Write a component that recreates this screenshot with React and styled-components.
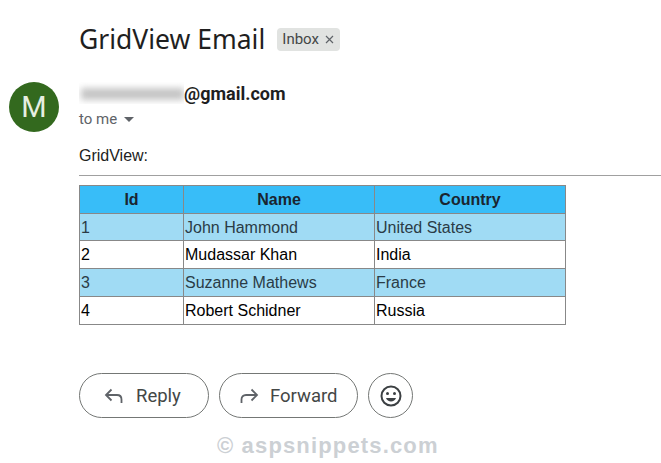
import React from 'react';
import styled, { createGlobalStyle } from 'styled-components';

const rows = [
    { id: 1, name: 'John Hammond', country: 'United States' },
    { id: 2, name: 'Mudassar Khan', country: 'India' },
    { id: 3, name: 'Suzanne Mathews', country: 'France' },
    { id: 4, name: 'Robert Schidner', country: 'Russia' },
];

function App() {
    return (
        <Wrapper>
            <GlobalStyle />
            <SubjectRow>
                <Subject>GridView Email</Subject>
                <Label>
                    Inbox
                    <svg width="9" height="9" viewBox="0 0 9 9">
                        <path d="M1 1l7 7M8 1L1 8" stroke="#5f6368" strokeWidth="1.2" fill="none" />
                    </svg>
                </Label>
            </SubjectRow>

            <MessageRow>
                <Avatar>M</Avatar>
                <MessageBody>
                    <Sender>
                        <BlurWrap><BlurBar /></BlurWrap>
                        @gmail.com
                    </Sender>
                    <ToMe>
                        to me
                        <svg width="10" height="5" viewBox="0 0 10 5">
                            <path d="M0 0h10L5 5z" fill="#5f6368" />
                        </svg>
                    </ToMe>
                    <Intro>GridView:</Intro>
                    <Rule />
                    <Table>
                        <thead>
                            <tr>
                                <HeadCell $w={104}>Id</HeadCell>
                                <HeadCell $w={191}>Name</HeadCell>
                                <HeadCell $w={191}>Country</HeadCell>
                            </tr>
                        </thead>
                        <tbody>
                            {rows.map((row, i) => (
                                <Row key={row.id} $alt={i % 2 === 0} $short={i === 0}>
                                    <Cell $low={i < 3}>{row.id}</Cell>
                                    <Cell $low={i < 3}>{row.name}</Cell>
                                    <Cell $low={i < 3}>{row.country}</Cell>
                                </Row>
                            ))}
                        </tbody>
                    </Table>
                </MessageBody>
            </MessageRow>

            <Actions>
                <PillButton $w={130} $pad={24} $gap={12}>
                    <svg width="20" height="20" viewBox="0 0 20 20">
                        <path d="M7.500 3.500L2 9l5.500 5.500M2.500 9H13c2.800 0 4.500 1.800 4.500 4.500V17" stroke="#5f6368" strokeWidth="1.800" fill="none" />
                    </svg>
                    Reply
                </PillButton>
                <PillButton $w={139} $pad={19} $gap={11}>
                    <svg width="20" height="20" viewBox="0 0 20 20">
                        <path d="M12.500 3.500L18 9l-5.500 5.500M17.500 9H7C4.200 9 2.500 10.800 2.500 13.500V17" stroke="#5f6368" strokeWidth="1.800" fill="none" />
                    </svg>
                    Forward
                </PillButton>
                <RoundButton>
                    <svg width="24" height="24" viewBox="0 0 24 24">
                        <circle cx="12" cy="12" r="9.500" stroke="#3c4043" strokeWidth="2" fill="none" />
                        <circle cx="8.500" cy="9.500" r="1.500" fill="#3c4043" />
                        <circle cx="15.500" cy="9.500" r="1.500" fill="#3c4043" />
                        <path d="M7 14h10c-.8 2.300-2.700 3.500-5 3.500S7.800 16.300 7 14z" fill="#3c4043" />
                    </svg>
                </RoundButton>
            </Actions>

            <Watermark>© aspsnippets.com</Watermark>
        </Wrapper>
    );
}

export default App;

const GlobalStyle = createGlobalStyle`
    html, body {
        margin: 0;
        padding: 0;
        background: #fff;
    }
    body {
        font-family: "Liberation Sans", Arial, sans-serif;
        overflow: hidden;
    }
`;

const Wrapper = styled.div`
    width: 661px;
    height: 463px;
    overflow: hidden;
    box-sizing: border-box;
    padding-top: 21px;
`;

const SubjectRow = styled.div`
    display: flex;
    align-items: center;
    height: 36px;
    padding-left: 79px;
    gap: 12px;
`;

const Subject = styled.h1`
    margin: 0;
    font-family: "Noto Sans", sans-serif;
    font-size: 26.5px;
    font-weight: 400;
    color: #1f1f1f;
    white-space: nowrap;
`;

const Label = styled.span`
    display: flex;
    align-items: center;
    gap: 6px;
    height: 23px;
    padding: 0 6px 0 5px;
    border-radius: 4px;
    background: #e1e3e1;
    font-family: Roboto, sans-serif;
    font-size: 15px;
    color: #444746;
`;

const MessageRow = styled.div`
    display: flex;
    margin-top: 25px;
    padding-left: 9px;
`;

const Avatar = styled.div`
    flex: none;
    display: flex;
    align-items: center;
    justify-content: center;
    width: 50px;
    height: 50px;
    border-radius: 50%;
    background: #33691e;
    color: #e6efe1;
    font-family: Roboto, sans-serif;
    font-size: 29px;
`;

const MessageBody = styled.div`
    flex: 1;
    margin-left: 20px;
`;

const Sender = styled.div`
    display: flex;
    align-items: center;
    height: 22px;
    font-family: Roboto, sans-serif;
    font-size: 18px;
    font-weight: 700;
    color: #1f1f1f;
`;

const BlurWrap = styled.span`
    display: block;
    width: 105px;
    height: 22px;
    overflow: hidden;
`;

const BlurBar = styled.span`
    display: block;
    width: 103px;
    height: 12px;
    margin: 6px 0 0 2px;
    background: #c6c6c6;
    filter: blur(3px);
`;

const ToMe = styled.div`
    display: flex;
    align-items: center;
    gap: 7px;
    height: 20px;
    margin-top: 5px;
    font-family: Roboto, sans-serif;
    font-size: 15px;
    color: #5f6368;
`;

const Intro = styled.div`
    margin-top: 18px;
    font-family: "Liberation Sans", Arial, sans-serif;
    font-size: 16px;
    line-height: 18px;
    color: #222;
`;

const Rule = styled.hr`
    margin: 10px 0 9px;
    border: 0;
    height: 1px;
    background: #a0a0a0;
`;

const Table = styled.table`
    width: 487px;
    table-layout: fixed;
    border-collapse: collapse;
    font-size: 16px;
    color: #000;
`;

const HeadCell = styled.th`
    width: ${p => p.$w}px;
    height: 28px;
    padding: 0;
    border: 1px solid #888;
    background: #38bdf8;
    color: #1a2530;
    font-weight: 700;
    text-align: center;
    box-sizing: border-box;
`;

const Row = styled.tr`
    height: ${p => (p.$short ? 27 : 28)}px;
    background: ${p => (p.$alt ? '#a0dbf4' : '#fff')};
    color: ${p => (p.$alt ? '#2a3b46' : '#000')};
`;

const Cell = styled.td`
    padding: ${p => (p.$low ? '1px' : '0')} 1px 0;
    border: 1px solid #888;
    white-space: nowrap;
`;

const Actions = styled.div`
    display: flex;
    gap: 10px;
    margin-top: 48px;
    padding-left: 79px;
`;

const PillButton = styled.div`
    display: flex;
    align-items: center;
    gap: ${p => p.$gap}px;
    width: ${p => p.$w}px;
    height: 45px;
    box-sizing: border-box;
    padding-left: ${p => p.$pad}px;
    border: 1px solid #747775;
    border-radius: 23px;
    font-family: Roboto, sans-serif;
    font-size: 18.500px;
    color: #444746;
`;

const RoundButton = styled.div`
    display: flex;
    align-items: center;
    justify-content: center;
    width: 45px;
    height: 45px;
    box-sizing: border-box;
    border: 1px solid #747775;
    border-radius: 50%;
`;

const Watermark = styled.div`
    margin-top: 15px;
    padding-left: 217px;
    font-size: 22px;
    line-height: 26px;
    font-weight: 700;
    letter-spacing: 1.150px;
    color: #ccd0d4;
    white-space: nowrap;
`;
